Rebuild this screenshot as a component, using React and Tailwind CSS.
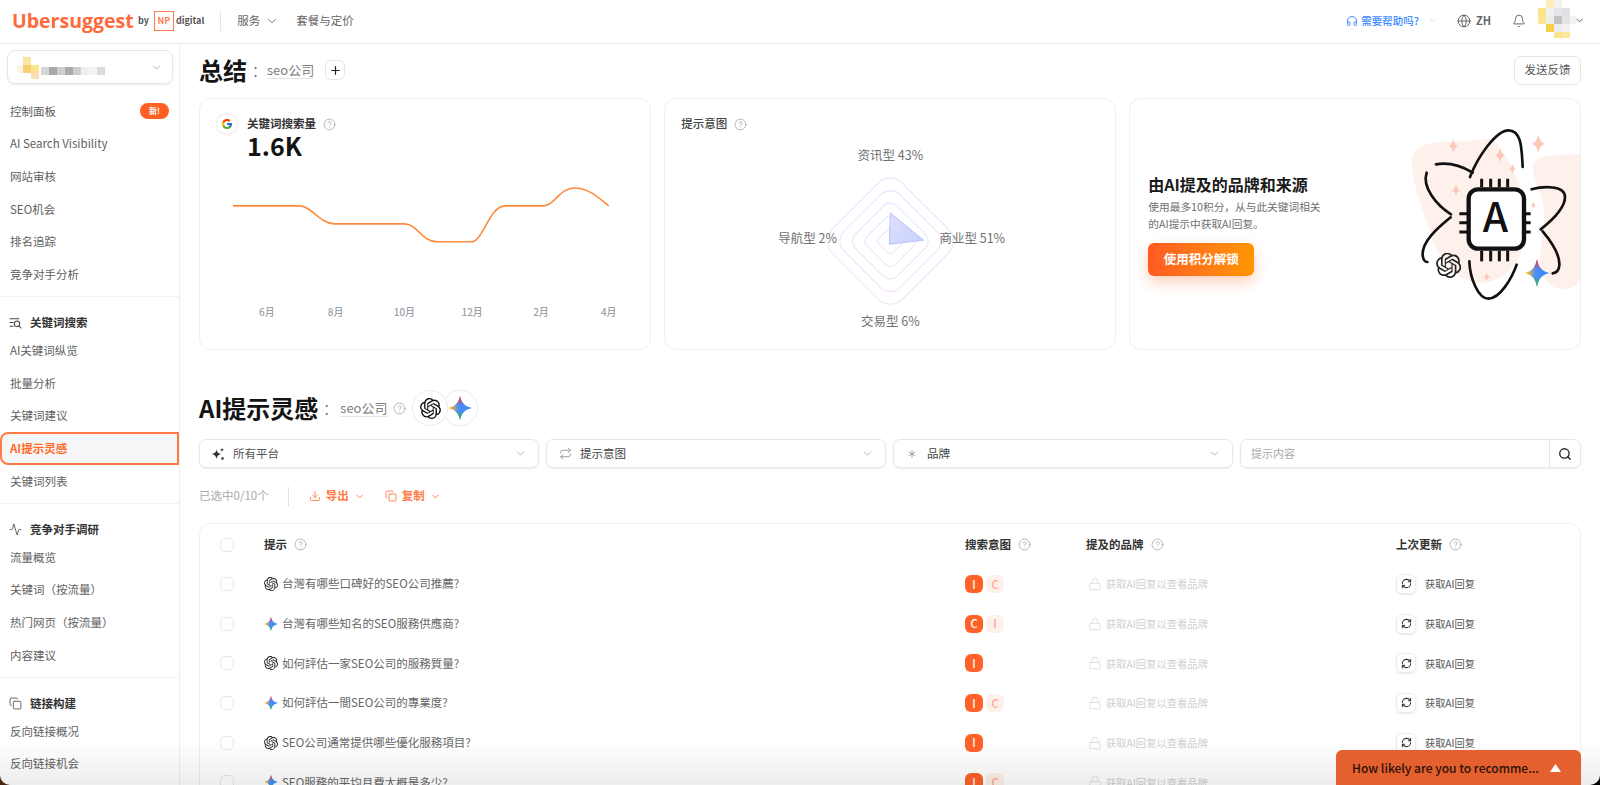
import React from "react";
import {
  ChevronDown, CircleHelp, Plus, Bell, Globe, Headphones, Search, Download, Copy, Lock, RefreshCw,
  Repeat, Asterisk, Activity,
} from "lucide-react";
import { SiOpenai } from "react-icons/si";
import { FcGoogle } from "react-icons/fc";

const starPath = "M12 0C13.5 7 17 10.5 24 12C17 13.5 13.5 17 12 24C10.5 17 7 13.5 0 12C7 10.5 10.5 7 12 0Z";

function Gemini({ size = 14 }) {
  return (
    <svg width={size} height={size} viewBox="0 0 24 24" className="shrink-0">
      <defs>
        <linearGradient id="gemA" x1="0" y1="0" x2="1" y2="0">
          <stop offset="0.12" stopColor="#fbb91f" />
          <stop offset="0.42" stopColor="#4f8ff7" />
          <stop offset="1" stopColor="#2f86f8" />
        </linearGradient>
        <linearGradient id="gemB" x1="0" y1="0" x2="0" y2="1">
          <stop offset="0.08" stopColor="#ee3f3f" />
          <stop offset="0.38" stopColor="#ee3f3f" stopOpacity="0" />
          <stop offset="0.62" stopColor="#2db357" stopOpacity="0" />
          <stop offset="0.92" stopColor="#2db357" />
        </linearGradient>
      </defs>
      <path d={starPath} fill="url(#gemA)" />
      <path d={starPath} fill="url(#gemB)" />
    </svg>
  );
}

function SearchLines() {
  return (
    <svg width="14" height="14" viewBox="0 0 14 14" fill="none" stroke="#444444" strokeWidth="1.1" strokeLinecap="round">
      <path d="M1 2.5H10.5M1 6.5H4.5M1 10.5H4.5" />
      <circle cx="8.6" cy="7.8" r="2.9" />
      <path d="M10.8 10L13 12.4" />
    </svg>
  );
}

function SparkDots() {
  return (
    <svg width="14" height="14" viewBox="0 0 14 14" fill="#333333">
      <path d="M5.5 2.5C6 5.5 7.5 6.5 10.5 7C7.5 7.5 6 9 5.5 12C5 9 3.5 7.5 0.5 7C3.5 6.5 5 5.5 5.5 2.5Z" />
      <path d="M11 0.5C11.2 2 11.8 2.6 13.2 2.8C11.8 3 11.2 3.6 11 5C10.8 3.6 10.2 3 8.8 2.8C10.2 2.6 10.8 2 11 0.5Z" />
      <circle cx="11.5" cy="11.5" r="1.3" />
    </svg>
  );
}

function Mosaic({ cells, w, h, className }) {
  return (
    <svg width={w} height={h} viewBox={`0 0 ${w} ${h}`} className={className}>
      <g style={{ filter: "blur(0.6px)" }}>
        {cells.map(([x, y, cw, ch, c], i) => (
          <rect key={i} x={x} y={y} width={cw} height={ch} fill={c} />
        ))}
      </g>
    </svg>
  );
}

const projectCells = [
  [11, 5, 8, 8, "#fbe6a6"], [11, 13, 8, 8, "#f9cf76"], [19, 13, 8, 8, "#fde28e"], [19, 21, 8, 6, "#fbdcb6"], [5, 13, 6, 8, "#fdf6e6"],
  [29, 15, 8, 8, "#d6d6d6"], [37, 15, 8, 8, "#a9a9a9"], [45, 15, 8, 8, "#cfcfcf"], [53, 15, 8, 8, "#ababab"],
  [61, 15, 8, 8, "#cdcdcd"], [69, 15, 8, 8, "#eeeeee"], [77, 15, 8, 8, "#f3f3f3"], [85, 15, 8, 8, "#dcdcdc"],
];

const avatarCells = [
  [8, 0, 8, 8, "#fdeebb"], [16, 0, 8, 8, "#f1f1f1"],
  [0, 8, 8, 8, "#fce38c"], [8, 8, 8, 8, "#f0f0f0"], [16, 8, 8, 8, "#e5e5e8"], [24, 8, 8, 8, "#e2e2e6"],
  [0, 16, 8, 8, "#fde596"], [8, 16, 8, 8, "#efeee4"], [16, 16, 8, 8, "#c3c3c7"], [24, 16, 8, 8, "#e4e4e6"], [32, 16, 6, 8, "#f3f3f3"],
  [8, 24, 8, 8, "#f6cf4d"], [16, 24, 8, 8, "#ededed"], [24, 24, 8, 8, "#f2f2f2"],
  [16, 32, 8, 6, "#fce38c"], [24, 32, 8, 6, "#fde79c"],
];

function NavItem({ children, badge, active }) {
  return (
    <div
      className={
        active
          ? "flex h-[32.65px] items-center rounded-l-[8px] border-2 border-[#ff7a45] bg-[#f6f6f6] pl-[8px] text-[11.5px] font-bold text-[#ff6a2b]"
          : "flex h-[32.65px] items-center justify-between pl-[10px] pr-[10px] text-[11.5px] text-[#606060]"
      }
    >
      <span>{children}</span>
      {badge && (
        <span className="flex h-[16px] w-[29px] items-center justify-center rounded-full bg-[#ff5f22] text-[8px] font-bold text-white">
          {badge}
        </span>
      )}
    </div>
  );
}

function NavHead({ icon, children }) {
  return (
    <div className="mt-[15px] flex h-[22.5px] items-center gap-[8px] pl-[9px] text-[11.5px] font-bold text-[#333333]">
      <span className="flex w-[13px] justify-center text-[#444444]">{icon}</span>
      <span>{children}</span>
    </div>
  );
}

function Group({ children, last }) {
  return <div className={last ? "" : "border-b border-[#f1f1f1] pb-[5px]"}>{children}</div>;
}

function Sidebar() {
  return (
    <aside className="w-[180px] shrink-0 border-r border-[#eeeeee]">
      <div className="mx-[7px] mt-[6px] flex h-[34px] w-[166px] items-center justify-between rounded-[8px] border border-[#e6e6e6] shadow-[0_1px_2px_rgba(0,0,0,0.08)]">
        <Mosaic cells={projectCells} w={96} h={31} className="ml-[4px]" />
        <ChevronDown size={13} strokeWidth={1.5} className="mr-[9px] text-[#a5a5a5]" />
      </div>
      <div className="mt-[11px]">
        <Group>
          <NavItem badge="新!">控制面板</NavItem>
          <NavItem>AI Search Visibility</NavItem>
          <NavItem>网站审核</NavItem>
          <NavItem>SEO机会</NavItem>
          <NavItem>排名追踪</NavItem>
          <NavItem>竞争对手分析</NavItem>
        </Group>
        <Group>
          <NavHead icon={<SearchLines />}>关键词搜索</NavHead>
          <NavItem>AI关键词纵览</NavItem>
          <NavItem>批量分析</NavItem>
          <NavItem>关键词建议</NavItem>
          <NavItem active>AI提示灵感</NavItem>
          <NavItem>关键词列表</NavItem>
        </Group>
        <Group>
          <NavHead icon={<Activity size={13} strokeWidth={1.5} />}>竞争对手调研</NavHead>
          <NavItem>流量概览</NavItem>
          <NavItem>关键词（按流量）</NavItem>
          <NavItem>热门网页（按流量）</NavItem>
          <NavItem>内容建议</NavItem>
        </Group>
        <Group last>
          <NavHead icon={<Copy size={13} strokeWidth={1.5} />}>链接构建</NavHead>
          <NavItem>反向链接概况</NavItem>
          <NavItem>反向链接机会</NavItem>
        </Group>
      </div>
    </aside>
  );
}

function Header() {
  return (
    <header className="flex h-[44px] shrink-0 items-center border-b border-[#ececec] pb-[2px] pl-[12px] pr-[15px]">
      <span className="w-[122px] whitespace-nowrap text-[19.5px] leading-none font-bold text-[#ff6a3d] [font-family:'Open_Sans',sans-serif]">Ubersuggest</span>
      <span className="ml-[4px] text-[9px] font-bold text-[#555555]">by</span>
      <span className="ml-[5px] flex h-[20px] w-[20px] items-center justify-center border border-[#ff7a55] text-[9px] font-semibold text-[#ff7a55]">NP</span>
      <span className="ml-[2px] text-[9px] font-bold text-[#555555]">digital</span>
      <div className="ml-[16px] h-[20px] w-px bg-[#e4e4e4]" />
      <span className="ml-[16px] text-[11.5px] text-[#666666]">服务</span>
      <ChevronDown size={14} strokeWidth={1.5} className="ml-[5px] text-[#666666]" />
      <span className="ml-[17px] text-[11.5px] text-[#666666]">套餐与定价</span>
      <div className="ml-auto flex items-center text-[#3d8bff]">
        <Headphones size={12} strokeWidth={2} />
        <span className="ml-[3px] text-[10.5px] font-medium">需要帮助吗?</span>
        <ChevronDown size={9} strokeWidth={1.5} className="ml-[9px] text-[#a9c9f5]" />
      </div>
      <Globe size={14} strokeWidth={1.5} className="ml-[20px] text-[#555555]" />
      <span className="ml-[5px] text-[11px] font-semibold text-[#666666]">ZH</span>
      <Bell size={14} strokeWidth={1.5} className="ml-[21px] text-[#555555]" />
      <Mosaic cells={avatarCells} w={38} h={38} className="ml-[12px] -mt-[4px]" />
      <ChevronDown size={11} strokeWidth={2} className="-ml-[2px] text-[#555555]" />
    </header>
  );
}

function Help({ size = 13 }) {
  return <CircleHelp size={size} strokeWidth={1.4} className="shrink-0 text-[#a0a0a0]" />;
}

function VolumeCard() {
  const labels = [[67, "6月"], [136, "8月"], [205, "10月"], [273, "12月"], [342, "2月"], [410, "4月"]];
  return (
    <div className="h-[252px] rounded-[12px] border border-[#eef0f2] pt-[16px]">
      <div className="flex h-[18px] items-center">
        <span className="ml-[17px] flex h-[20px] w-[20px] items-center justify-center rounded-full bg-white shadow-[0_0_3px_rgba(0,0,0,0.18)]">
          <FcGoogle size={12} />
        </span>
        <span className="ml-[10px] text-[11.5px] font-semibold text-[#333333]">关键词搜索量</span>
        <span className="ml-[7px]"><Help /></span>
      </div>
      <div className="ml-[47px] h-[29px] text-[25px] leading-[25px] font-bold text-[#141414]">1.6K</div>
      <svg viewBox="0 0 451 170" className="mt-[9px] block w-full">
        <path d="M33 35L100 35C112 35 120 53 135 53L205 53C218 53 222 71 238 71L272 71C284 71 290 35 306 35L344 35C356 35 360 17 376 17C390 17 400 27 410 35" fill="none" stroke="#ff8a3c" strokeWidth="1.6" />
        {labels.map(([x, t]) => (
          <text key={t} x={x} y={143} textAnchor="middle" dominantBaseline="middle" fontSize="10" fontWeight="500" fill="#9aa0a8">{t}</text>
        ))}
      </svg>
    </div>
  );
}

function IntentCard() {
  const ks = [1, 0.8, 0.6, 0.4, 0.2];
  return (
    <div className="h-[252px] rounded-[12px] border border-[#eef0f2] pt-[16px]">
      <div className="flex h-[18px] items-center pl-[16px]">
        <span className="text-[11.5px] font-medium text-[#444444]">提示意图</span>
        <span className="ml-[7px]"><Help /></span>
      </div>
      <svg viewBox="0 0 449 190" className="mt-[9px] block w-full">
        <defs>
          <linearGradient id="ring" x1="0" y1="0" x2="1" y2="1">
            <stop offset="0" stopColor="#dfe4ff" />
            <stop offset="1" stopColor="#f6def8" />
          </linearGradient>
          <linearGradient id="tri" x1="0" y1="0" x2="1" y2="1">
            <stop offset="0" stopColor="#e6def8" />
            <stop offset="1" stopColor="#c3d2ff" />
          </linearGradient>
        </defs>
        {ks.map((k) => (
          <rect key={k} x={225 - 49.5 * k} y={99 - 49.5 * k} width={99 * k} height={99 * k} rx={17 * k} fill="none" stroke="url(#ring)" strokeWidth="1" transform="rotate(45 225 99)" />
        ))}
        <path d="M225 71L258 98L224 102Z" fill="url(#tri)" stroke="#b5c4ff" strokeWidth="1" strokeLinejoin="round" />
        <g fontSize="12.5" fill="#707070">
          <text x="225" y="15" textAnchor="middle" dominantBaseline="middle">资讯型 43%</text>
          <text x="274" y="97" dominantBaseline="middle">商业型 51%</text>
          <text x="113" y="97" dominantBaseline="middle">导航型 2%</text>
          <text x="225" y="180" textAnchor="middle" dominantBaseline="middle">交易型 6%</text>
        </g>
      </svg>
    </div>
  );
}

function Star({ x, y, r }) {
  const k = r * 0.16;
  return (
    <path
      d={`M${x} ${y - r}Q${x + k} ${y - k} ${x + r * 0.7} ${y}Q${x + k} ${y + k} ${x} ${y + r}Q${x - k} ${y + k} ${x - r * 0.7} ${y}Q${x - k} ${y - k} ${x} ${y - r}Z`}
      fill="#fcc9b9"
    />
  );
}

function Atom() {
  const stars = [[1000, 142, 21], [1255, 135, 28], [1140, 170, 22], [1177, 210, 15], [1008, 275, 19], [1240, 320, 11], [1100, 535, 14]];
  return (
    <svg viewBox="870 85 513 525" className="h-[175px] w-[171px] shrink-0">
      <path d="M875 190C875 140 930 125 1000 130L1120 120C1180 190 1225 300 1220 400C1210 480 1160 550 1085 552C1010 550 960 500 930 400C905 320 875 250 875 190Z" fill="#fef1ec" />
      <path d="M1240 195C1260 165 1310 170 1383 165L1383 545C1350 580 1310 585 1275 540C1240 500 1280 400 1270 320C1260 270 1235 230 1240 195Z" fill="#fef1ec" />
      {stars.map(([x, y, r], i) => <Star key={i} x={x} y={y} r={r} />)}
      <g fill="none" stroke="#111111" strokeWidth="8" strokeLinecap="round">
        <path d="M1050 235C1075 170 1130 95 1165 95C1205 95 1205 150 1208 205" />
        <path d="M948 197C990 190 1030 205 1058 222" />
        <path d="M920 222C905 265 950 320 993 347" />
        <path d="M992 356C950 390 905 430 908 470C910 485 915 490 922 490" />
        <path d="M1048 488C1050 540 1075 600 1105 600C1140 600 1175 540 1190 498" />
        <path d="M1235 272C1270 262 1335 260 1335 295C1335 330 1290 370 1262 392" />
        <path d="M1268 398C1295 430 1320 470 1318 500C1317 515 1310 522 1298 524" />
        {[1085, 1112, 1138, 1163].map((x) => <path key={x} d={`M${x} 240V266`} strokeWidth="9" strokeLinecap="butt" />)}
        {[1085, 1112, 1138, 1163].map((x) => <path key={x} d={`M${x} 456V488`} strokeWidth="9" strokeLinecap="butt" />)}
        {[345, 372, 400].map((y) => <path key={y} d={`M1018 ${y}H1042`} strokeWidth="9" strokeLinecap="butt" />)}
        {[345, 372, 400].map((y) => <path key={y} d={`M1216 ${y}H1232`} strokeWidth="9" strokeLinecap="butt" />)}
      </g>
      <rect x="1046" y="272" width="166" height="178" rx="28" fill="#ffffff" stroke="#111111" strokeWidth="13" />
      <text x="1126" y="400" textAnchor="middle" fontSize="122" fontWeight="500" fill="#111111">A</text>
      <svg x="948" y="462" width="76" height="76" viewBox="0 0 24 24"><SiOpenai size={24} color="#222222" /></svg>
      <svg x="1214" y="482" width="74" height="82" viewBox="0 0 24 24" preserveAspectRatio="none"><Gemini size={24} /></svg>
    </svg>
  );
}

function PromoCard() {
  return (
    <div className="flex h-[252px] items-start overflow-hidden rounded-[12px] border border-[#eef0f2]">
      <div className="ml-[18px] mt-[74px] w-[190px]">
        <div className="text-[16px] leading-[22px] font-bold text-[#1a1a1a]">由AI提及的品牌和来源</div>
        <div className="mt-[4px] text-[10.7px] leading-[16.5px] text-[#6f6f6f]">
          使用最多10积分，从与此关键词相关<br />的AI提示中获取AI回复。
        </div>
        <button className="mt-[11px] flex h-[33px] w-[106px] items-center justify-center rounded-[6px] bg-gradient-to-r from-[#ff5a22] to-[#ff9500] text-[12.5px] font-bold text-white shadow-[0_6px_14px_rgba(255,106,40,0.32)]">
          使用积分解锁
        </button>
      </div>
      <div className="ml-auto mt-[28px] -mr-[1px]"><Atom /></div>
    </div>
  );
}

function Filter({ icon, label, bold }) {
  return (
    <div className="flex h-[29px] items-center rounded-[7px] border border-[#e8e8e8] pl-[11px] pr-[11px] shadow-[0_1px_2px_rgba(0,0,0,0.08)]">
      <span className="flex w-[14px] justify-center">{icon}</span>
      <span className={`ml-[8px] text-[11.5px] ${bold ? "text-[#444444]" : "text-[#555555]"}`}>{label}</span>
      <ChevronDown size={13} strokeWidth={1.5} className="ml-auto text-[#a5a5a5]" />
    </div>
  );
}

const rows = [
  ["o", "台灣有哪些口碑好的SEO公司推薦?", ["I", "C"]],
  ["g", "台灣有哪些知名的SEO服務供應商?", ["C", "I"]],
  ["o", "如何評估一家SEO公司的服務質量?", ["I"]],
  ["g", "如何評估一間SEO公司的專業度?", ["I", "C"]],
  ["o", "SEO公司通常提供哪些優化服務項目?", ["I"]],
  ["g", "SEO服務的平均月費大概是多少?", ["I", "C"]],
];

const gridCols = "grid grid-cols-[64px_701px_121px_310px_1fr] items-center";

function Check() {
  return <span className="ml-[20px] block h-[14px] w-[14px] rounded-[5px] border border-[#e6e6e6]" />;
}

function Table() {
  return (
    <div className="mt-[17px] rounded-[12px] border border-[#eef0f2]">
      <div className={`${gridCols} h-[40px] pt-[1px] text-[11.5px] font-semibold text-[#333333]`}>
        <Check />
        <div className="flex items-center gap-[7px]">提示<Help /></div>
        <div className="flex items-center gap-[7px]">搜索意图<Help /></div>
        <div className="flex items-center gap-[7px]">提及的品牌<Help /></div>
        <div className="flex items-center gap-[7px]">上次更新<Help /></div>
      </div>
      {rows.map(([ic, text, tags], i) => (
        <div key={i} className={`${gridCols} h-[39.7px]`}>
          <Check />
          <div className="flex items-center gap-[4px] text-[11.5px] text-[#666666]">
            {ic === "o" ? <SiOpenai size={14} className="shrink-0 text-[#222222]" /> : <Gemini size={14} />}
            <span>{text}</span>
          </div>
          <div className="flex gap-[3px]">
            {tags.map((t, j) => (
              <span
                key={t}
                className={
                  j === 0
                    ? "flex h-[18px] w-[18px] items-center justify-center rounded-[6px] bg-[#ff6229] text-[11px] font-medium text-white"
                    : "flex h-[18px] w-[18px] items-center justify-center rounded-[6px] bg-[#fef0ea] text-[11px] font-medium text-[#ffa78a]"
                }
              >
                {t}
              </span>
            ))}
          </div>
          <div className="flex items-center text-[10.3px] text-[#cfcfcf]">
            <Lock size={14} strokeWidth={1.25} className="ml-[2px] text-[#d6d6d6]" />
            <span className="ml-[4px]">获取AI回复以查看品牌</span>
          </div>
          <div className="flex items-center">
            <span className="flex h-[20px] w-[20px] items-center justify-center rounded-[6px] border border-[#ececec] shadow-[0_1px_2px_rgba(0,0,0,0.1)]">
              <RefreshCw size={11} strokeWidth={2.25} className="text-[#333333]" />
            </span>
            <span className="ml-[9px] text-[10.2px] text-[#555555]">获取AI回复</span>
          </div>
        </div>
      ))}
    </div>
  );
}

function Main() {
  return (
    <main className="min-w-0 flex-1 overflow-hidden px-[19px] pt-[11px]">
      <div className="flex h-[30px] items-center">
        <h1 className="text-[24px] leading-none font-bold text-[#141414]">总结</h1>
        <span className="ml-[5px] text-[14px] text-[#777777]">：</span>
        <span className="ml-[1px] border-b border-[#e4e4e4] text-[13px] leading-[17px] text-[#808080]">seo公司</span>
        <span className="ml-[11px] flex h-[20px] w-[20px] items-center justify-center rounded-[6px] border border-[#e6e6e6]">
          <Plus size={13} strokeWidth={2.25} className="text-[#222222]" />
        </span>
        <button className="ml-auto flex h-[29px] w-[67px] items-center justify-center rounded-[7px] border border-[#e6e6e6] text-[11.5px] text-[#555555]">发送反馈</button>
      </div>
      <div className="mt-[13px] grid grid-cols-3 gap-[13.5px]">
        <VolumeCard />
        <IntentCard />
        <PromoCard />
      </div>
      <div className="mt-[40px] flex h-[36px] items-center">
        <h2 className="text-[24px] leading-none font-bold text-[#141414]">AI提示灵感</h2>
        <span className="ml-[5px] text-[14px] text-[#777777]">：</span>
        <span className="ml-[3px] border-b border-[#e4e4e4] text-[13px] leading-[17px] text-[#808080]">seo公司</span>
        <span className="ml-[6px]"><Help /></span>
        <span className="relative z-10 ml-[6px] flex h-[36px] w-[36px] items-center justify-center rounded-full border border-[#ececec] bg-white">
          <SiOpenai size={21} className="text-[#111111]" />
        </span>
        <span className="-ml-[6px] flex h-[36px] w-[36px] items-center justify-center rounded-full border border-[#ececec] bg-white">
          <Gemini size={24} />
        </span>
      </div>
      <div className="mt-[13px] grid grid-cols-[340px_340px_340px_1fr] gap-[7px]">
        <Filter icon={<SparkDots />} label="所有平台" />
        <Filter icon={<Repeat size={13} strokeWidth={1.5} className="text-[#888888]" />} label="提示意图" bold />
        <Filter icon={<Asterisk size={16} strokeWidth={1.25} className="text-[#888888]" />} label="品牌" bold />
        <div className="flex h-[29px] items-center rounded-[7px] border border-[#e8e8e8] pl-[10px] shadow-[0_1px_2px_rgba(0,0,0,0.08)]">
          <span className="text-[11px] text-[#a8a8a8]">提示内容</span>
          <span className="ml-auto flex h-full w-[31px] items-center justify-center border-l border-[#e8e8e8]">
            <Search size={14} strokeWidth={2.25} className="text-[#222222]" />
          </span>
        </div>
      </div>
      <div className="mt-[18px] flex h-[20px] items-center">
        <span className="text-[11.5px] text-[#aaaaaa]">已选中0/10个</span>
        <div className="ml-[19px] h-[19px] w-px bg-[#e2e2e2]" />
        <Download size={12} strokeWidth={1.75} className="ml-[20px] text-[#ff7a45]" />
        <span className="ml-[5px] text-[11.5px] font-semibold text-[#ff7a45]">导出</span>
        <ChevronDown size={11} strokeWidth={2} className="ml-[5px] text-[#ff7a45]" />
        <Copy size={12} strokeWidth={1.75} className="ml-[20px] text-[#ff7a45]" />
        <span className="ml-[5px] text-[11.5px] font-semibold text-[#ff7a45]">复制</span>
        <ChevronDown size={11} strokeWidth={2} className="ml-[5px] text-[#ff7a45]" />
      </div>
      <Table />
    </main>
  );
}

export default function App() {
  return (
    <div className="h-screen w-full overflow-hidden bg-gradient-to-r from-[#4a2413] to-[#000000] [font-family:'Noto_Sans_CJK_SC','Noto_Sans',sans-serif]">
      <div className="relative flex h-full flex-col overflow-hidden rounded-b-[10px] bg-white">
        <Header />
        <div className="flex min-h-0 flex-1">
          <Sidebar />
          <Main />
        </div>
        <div className="pointer-events-none absolute inset-x-0 bottom-0 h-[45px] bg-gradient-to-b from-transparent to-[rgba(0,0,0,0.07)]" />
        <div className="absolute bottom-0 right-[19px] flex h-[35px] w-[245px] items-center rounded-t-[6px] bg-[#e5602f] pl-[16px]">
          <span className="text-[12px] font-medium text-[#2a1208]">How likely are you to recomme...</span>
          <svg width="11" height="8" viewBox="0 0 11 8" className="ml-[11px]"><path d="M5.5 0L11 8H0Z" fill="#ffffff" /></svg>
        </div>
      </div>
    </div>
  );
}
